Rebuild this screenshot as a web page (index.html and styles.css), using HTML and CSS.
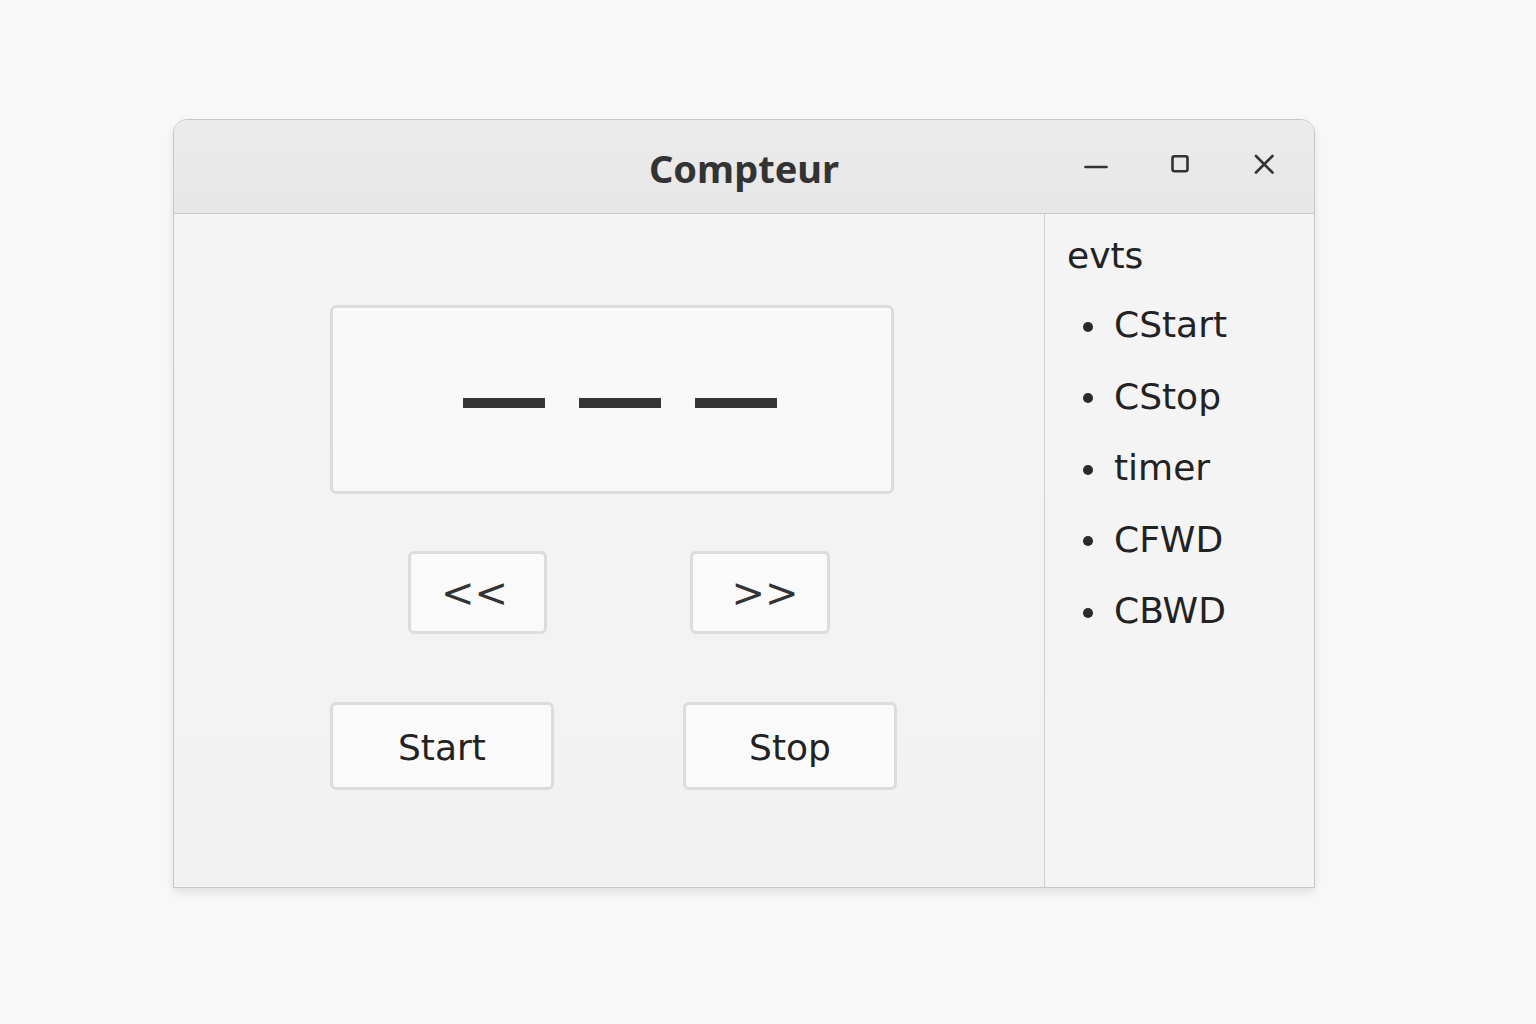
FILE: index.html
```html
<!DOCTYPE html>
<html lang="fr">
<head>
<meta charset="utf-8">
<title>Compteur</title>
<link rel="stylesheet" href="styles.css">
</head>
<body>
<div class="window">
  <header class="titlebar">
    <div class="spacer"></div>
    <h1 class="title">Compteur</h1>
    <div class="controls">
      <span class="ctrl"><svg width="24" height="24" viewBox="0 0 24 24"><path d="M1.5 15h21" stroke="#333" stroke-width="2.6" stroke-linecap="round" fill="none"/></svg></span>
      <span class="ctrl"><svg width="24" height="24" viewBox="0 0 24 24"><rect x="4.5" y="4.3" width="15" height="15" rx="2" stroke="#333" stroke-width="2.6" fill="none"/></svg></span>
      <span class="ctrl"><svg width="24" height="24" viewBox="0 0 24 24"><path d="M4 4l16.5 16.5M20.5 4L4 20.5" stroke="#333" stroke-width="2.6" stroke-linecap="round" fill="none"/></svg></span>
    </div>
  </header>
  <div class="content">
    <main class="main">
      <div class="display" aria-label="— — —">
        <span class="dash"></span><span class="dash"></span><span class="dash"></span>
      </div>
      <div class="row arrows">
        <button class="btn btn-back">&lt;&lt;</button>
        <button class="btn btn-fwd">&gt;&gt;</button>
      </div>
      <div class="row actions">
        <button class="btn btn-start">Start</button>
        <button class="btn btn-stop">Stop</button>
      </div>
    </main>
    <aside class="events">
      <div class="events-title">evts</div>
      <ul class="event-list">
        <li>CStart</li>
        <li>CStop</li>
        <li>timer</li>
        <li>CFWD</li>
        <li>CBWD</li>
      </ul>
    </aside>
  </div>
</div>
</body>
</html>
```

FILE: styles.css
```css
* { box-sizing: border-box; }

html, body {
  margin: 0;
  padding: 0;
  background: #f8f8f8;
  font-family: "DejaVu Sans", "Noto Sans", sans-serif;
  color: #222;
}

body {
  width: 1536px;
  height: 1024px;
  padding: 119px 0 0 173px;
}

.window {
  width: 1142px;
  height: 769px;
  border: 1px solid #c8c8c8;
  border-radius: 14px 14px 0 0;
  background: #f3f3f3;
  box-shadow: 0 5px 10px rgba(0, 0, 0, 0.09);
  display: flex;
  flex-direction: column;
  overflow: hidden;
}

.titlebar {
  height: 94px;
  flex: none;
  border-bottom: 1px solid #c9c9c9;
  background: linear-gradient(#ebebeb, #e7e7e7);
  display: grid;
  grid-template-columns: 1fr auto 1fr;
  align-items: center;
}

.title {
  margin: 0;
  font-family: "Noto Sans", "DejaVu Sans", sans-serif;
  font-size: 38px;
  font-weight: 700;
  color: #333;
  padding-top: 2px;
}

.controls {
  display: flex;
  justify-content: flex-end;
  padding-right: 8px;
  padding-bottom: 6px;
}

.ctrl {
  width: 84px;
  height: 40px;
  display: flex;
  align-items: center;
  justify-content: center;
}

.content {
  flex: 1;
  display: flex;
  min-height: 0;
}

.main {
  width: 871px;
  border-right: 1px solid #cfcfcf;
  padding: 91px 0 0 156px;
  display: flex;
  flex-direction: column;
  background: linear-gradient(#f4f4f4, #f2f2f2);
}

.display {
  width: 564px;
  height: 189px;
  border: 3px solid #dcdcdc;
  border-radius: 6px;
  background: #f9f9f9;
  display: flex;
  justify-content: center;
  align-items: center;
  gap: 34px;
  padding: 6px 0 0 16px;
}

.dash {
  width: 82px;
  height: 10px;
  background: #353535;
}

.row {
  display: flex;
}

.btn {
  font-family: "DejaVu Sans", "Noto Sans", sans-serif;
  font-size: 36px;
  color: #222;
  background: #fafafa;
  border: 3px solid #dcdcdc;
  border-radius: 6px;
  padding: 0;
  display: flex;
  align-items: center;
  justify-content: center;
  line-height: 1;
}

.arrows {
  margin-top: 57px;
  padding-left: 78px;
  gap: 143px;
}

.btn-back, .btn-fwd {
  width: 139px;
  height: 83px;
  font-size: 40px;
  color: #333;
}

.btn-fwd { width: 140px; padding-left: 10px; }
.btn-back { padding-right: 6px; }

.actions {
  margin-top: 68px;
  gap: 129px;
}

.btn-start {
  width: 224px;
  height: 88px;
  padding-top: 3px;
}

.btn-stop {
  width: 214px;
  height: 88px;
  padding-top: 3px;
}

.events {
  flex: 1;
  padding: 16px 0 0 22px;
  background: #f4f4f4;
}

.events-title {
  font-size: 36px;
  line-height: 52px;
}

.event-list {
  list-style: none;
  margin: 7px 0 0 0;
  padding: 0;
}

.event-list li {
  font-size: 36px;
  line-height: 71.5px;
  display: flex;
  align-items: center;
}

.event-list li::before {
  content: "";
  width: 10px;
  height: 10px;
  border-radius: 50%;
  background: #2a2a2a;
  margin: 4px 21px 0 16px;
  flex: none;
}
```
